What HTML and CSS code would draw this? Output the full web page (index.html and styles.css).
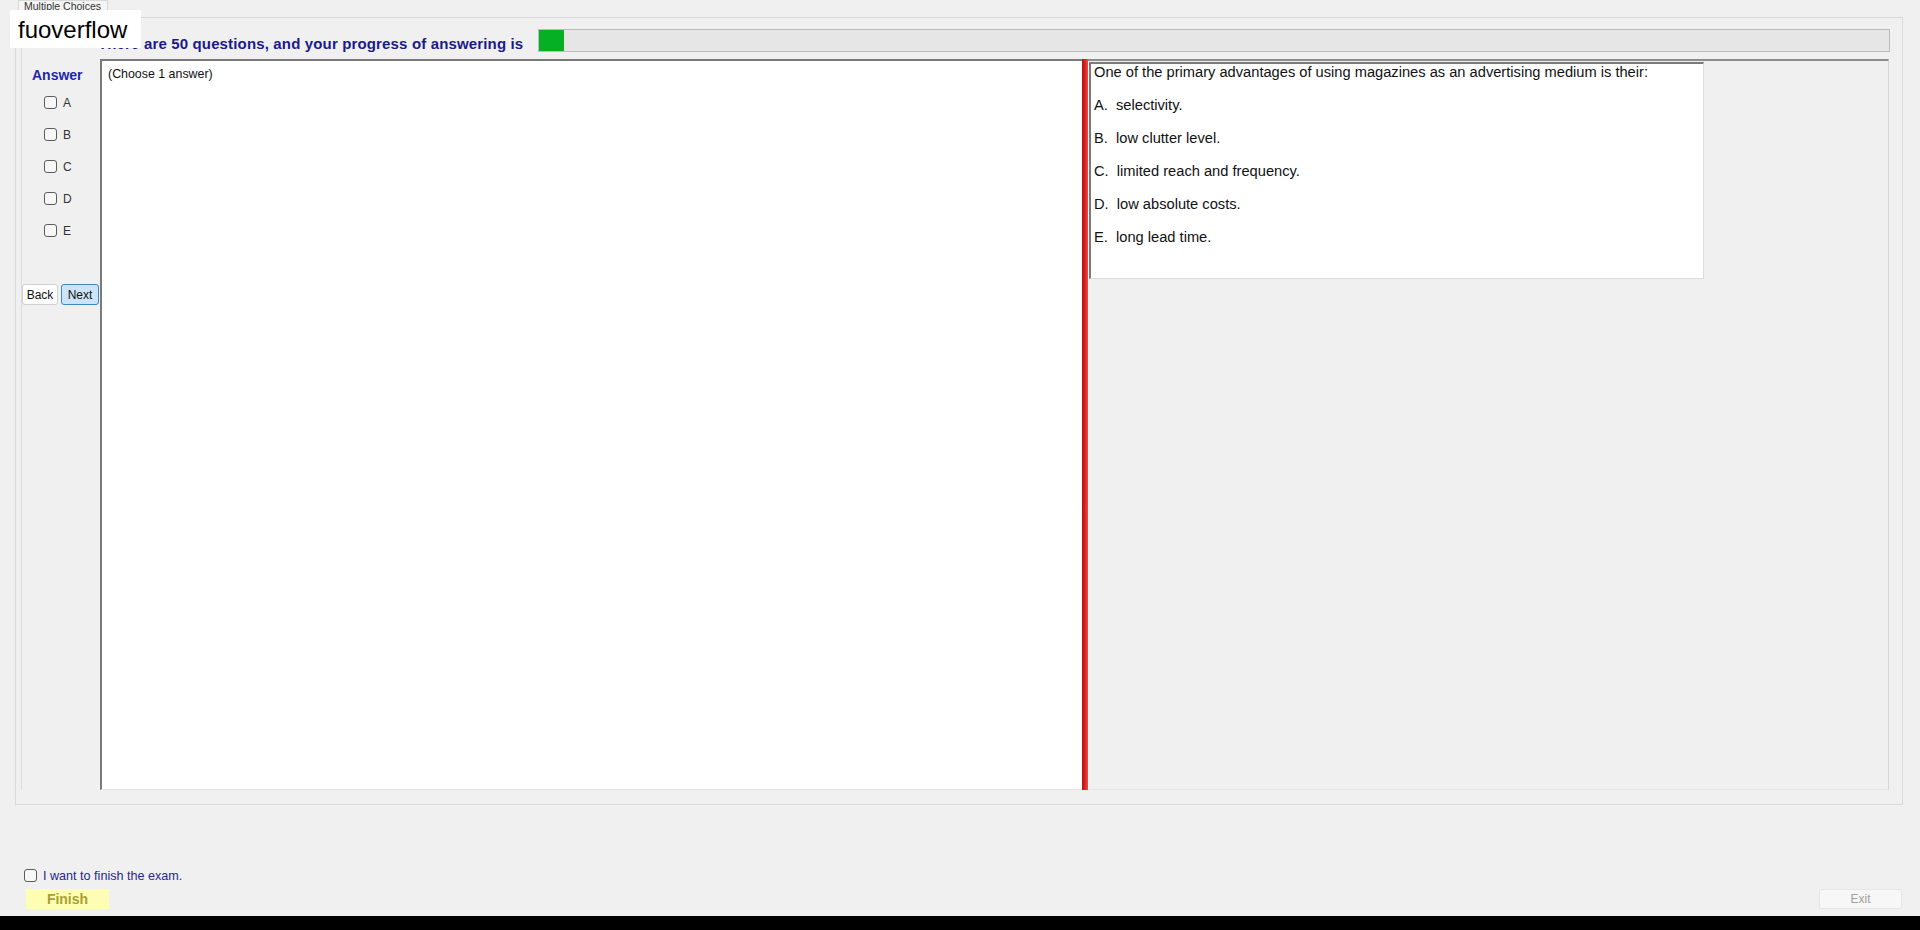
FILE: index.html
```html
<!DOCTYPE html>
<html lang="en">
<head>
    <meta charset="utf-8" />
    <title>Multiple Choices</title>
    <link rel="stylesheet" href="styles.css">
</head>
<body>
    <div class="watermark">fuoverflow</div>

    <div class="tab-strip">
        <div class="tab">Multiple Choices</div>
    </div>

    <div class="tab-page">
        <div class="frame">
            <div class="header-row">
                <span class="progress-label">There are 50 questions, and your progress of answering is</span>
                <div class="progress-track">
                    <div class="progress-fill"></div>
                </div>
            </div>

            <div class="body-row">
                <div class="answer-col">
                    <div class="answer-title">Answer</div>
                    <label class="choice"><input type="checkbox"> A</label>
                    <label class="choice"><input type="checkbox"> B</label>
                    <label class="choice"><input type="checkbox"> C</label>
                    <label class="choice"><input type="checkbox"> D</label>
                    <label class="choice"><input type="checkbox"> E</label>
                    <div class="nav-buttons">
                        <button class="btn btn-back">Back</button>
                        <button class="btn btn-focus">Next</button>
                    </div>
                </div>

                <div class="work-area">
                    <div class="hint">(Choose 1 answer)</div>
                </div>

                <div class="splitter"></div>

                <div class="question-panel">
                    <div class="question-box">
                        <p>One of the primary advantages of using magazines as an advertising medium is their:</p>
                        <p>A.&nbsp; selectivity.</p>
                        <p>B.&nbsp; low clutter level.</p>
                        <p>C.&nbsp; limited reach and frequency.</p>
                        <p>D.&nbsp; low absolute costs.</p>
                        <p>E.&nbsp; long lead time.</p>
                    </div>
                </div>
            </div>
        </div>
    </div>

    <div class="finish-area">
        <label class="finish-check"><input type="checkbox"> I want to finish the exam.</label>
        <div class="finish-row">
            <button class="btn-finish">Finish</button>
            <button class="btn-exit">Exit</button>
        </div>
    </div>

    <div class="bottom-bar"></div>
</body>
</html>
```

FILE: styles.css
```css
html, body {
    margin: 0;
    height: 930px;
    overflow: hidden;
}
body {
    background-color: #f0f0f0;
    font-family: "Liberation Sans", Arial, sans-serif;
    color: #222;
    display: flex;
    flex-direction: column;
}
button {
    font-family: inherit;
    cursor: pointer;
}
input[type="checkbox"] {
    appearance: none;
    -webkit-appearance: none;
    width: 13px;
    height: 13px;
    margin: 0;
    border: 1px solid #5c5c5c;
    border-radius: 3px;
    background-color: #f7f7f7;
    flex-shrink: 0;
}

.watermark {
    position: absolute;
    left: 10px;
    top: 10px;
    width: 131px;
    height: 38px;
    box-sizing: border-box;
    padding: 7px 0 0 8px;
    background-color: #fff;
    color: #000;
    font-size: 24px;
    line-height: 26px;
    z-index: 2;
}

/* tab strip */
.tab-strip {
    height: 17px;
    padding-left: 18px;
    display: flex;
}
.tab {
    width: 90px;
    height: 18px;
    box-sizing: border-box;
    border: 1px solid #d9d9d9;
    border-bottom: none;
    background-color: #f5f5f5;
    font-size: 10.5px;
    line-height: 11px;
    padding-left: 5px;
    color: #333;
    position: relative;
    z-index: 1;
}
.tab-page {
    margin-left: 15px;
    width: 1888px;
    box-sizing: border-box;
    border: 1px solid #dadada;
    padding: 11px 13px 14px 5px;
}
.frame {
    border-left: 1px solid #dcdcdc;
}

/* header */
.header-row {
    display: flex;
    align-items: center;
    height: 23px;
}
.progress-label {
    align-self: flex-end;
    width: 440px;
    padding-left: 76px;
    flex-shrink: 0;
    font-size: 15px;
    line-height: 17px;
    letter-spacing: 0.15px;
    font-weight: bold;
    color: #1a1a8e;
    white-space: nowrap;
}
.progress-track {
    flex: 1;
    height: 23px;
    box-sizing: border-box;
    border: 1px solid #bcbcbc;
    background-color: #e6e6e6;
    margin-right: -1px;
}
.progress-fill {
    width: 25px;
    height: 100%;
    background-color: #06b025;
}

/* main body */
.body-row {
    display: flex;
    height: 731px;
    margin-top: 7px;
}
.answer-col {
    width: 78px;
    flex-shrink: 0;
}
.answer-title {
    margin: 8px 0 13px 10px;
    font-size: 14px;
    line-height: 16px;
    font-weight: bold;
    color: #1c28a8;
}
.choice {
    display: flex;
    align-items: center;
    gap: 6px;
    height: 13px;
    margin: 0 0 19px 22px;
    font-size: 12px;
    color: #333;
}
.nav-buttons {
    display: flex;
    gap: 3px;
    margin-top: 47px;
}
.btn {
    height: 21px;
    padding: 0;
    border: 1px solid #d0d0d0;
    border-radius: 3px;
    background-color: #fdfdfd;
    font-size: 12px;
    color: #111;
}
.btn-back {
    width: 36px;
}
.btn-focus {
    width: 38px;
    border-color: #3d87c4;
    background-color: #cce4f7;
}

.work-area {
    width: 982px;
    flex-shrink: 0;
    box-sizing: border-box;
    background-color: #fff;
    border-top: 2px solid #7a7a7a;
    border-left: 2px solid #7a7a7a;
    border-bottom: 1px solid #e3e3e3;
    padding: 6px 0 0 6px;
}
.hint {
    font-size: 12.4px;
    line-height: 15px;
    color: #111;
}

.splitter {
    width: 6px;
    flex-shrink: 0;
    background: linear-gradient(to right, #b81010, #d81e1e 45%, #e35050);
}

.question-panel {
    flex: 1;
    box-sizing: border-box;
    border-top: 2px solid #8c8c8c;
    border-right: 1px solid #d6d6d6;
    border-bottom: 1px solid #e6e6e6;
    padding: 1px 0 0 1px;
}
.question-box {
    width: 615px;
    height: 217px;
    box-sizing: border-box;
    background-color: #fff;
    border-top: 2px solid #7a7a7a;
    border-left: 2px solid #7a7a7a;
    border-right: 1px solid #dcdcdc;
    border-bottom: 1px solid #dcdcdc;
    padding: 0 0 0 3px;
}
.question-box p {
    margin: 0 0 16px;
    font-size: 11pt;
    line-height: 17px;
    color: #111;
}

/* finish area */
.finish-area {
    padding-top: 64px;
}
.finish-check {
    display: flex;
    align-items: center;
    gap: 6px;
    height: 13px;
    margin-left: 24px;
    font-size: 12.6px;
    color: #2a2590;
}
.finish-row {
    display: flex;
    justify-content: space-between;
    margin-top: 7px;
    padding: 0 18px 0 26px;
}
.btn-finish {
    width: 83px;
    height: 20px;
    border: none;
    background-color: #fdfdb4;
    color: #a89f30;
    font-size: 14px;
    font-weight: bold;
    padding: 0;
}
.btn-exit {
    width: 83px;
    height: 20px;
    border: 1px solid #e6e6e6;
    border-radius: 2px;
    background-color: #f7f7f7;
    color: #a0a0a0;
    font-size: 12px;
    padding: 0;
}

.bottom-bar {
    margin-top: auto;
    height: 14px;
    background-color: #000;
}
```
